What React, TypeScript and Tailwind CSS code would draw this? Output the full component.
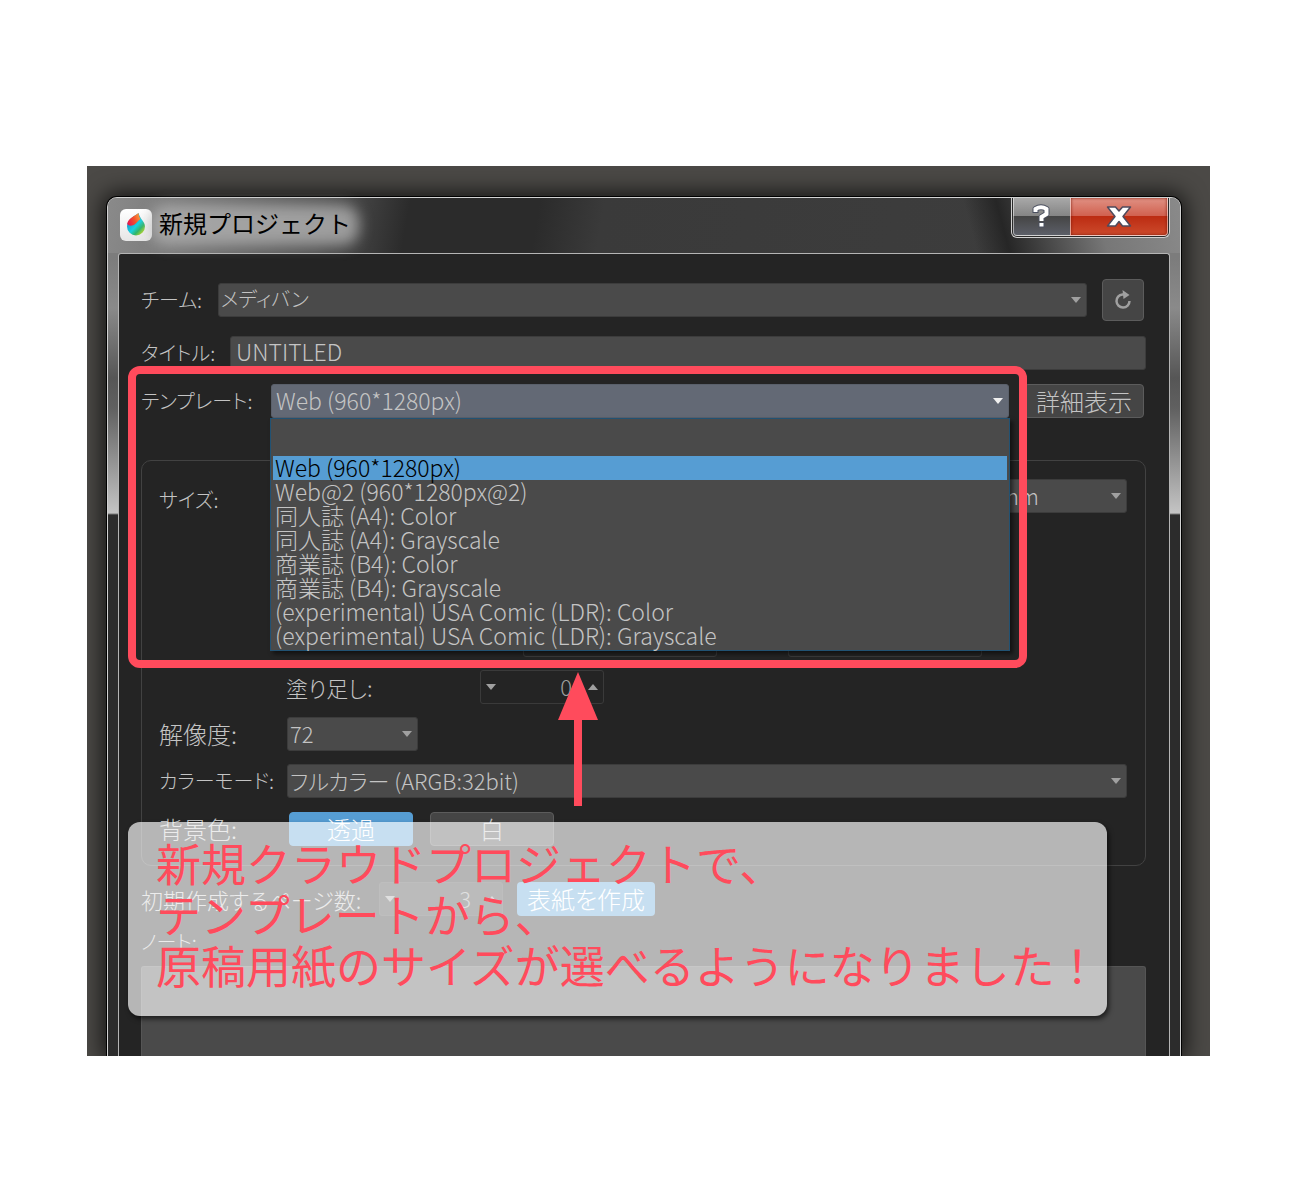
import { ReactNode, useState } from "react";
import clsx from "clsx";

const templates = [
  "Web (960*1280px)",
  "Web@2 (960*1280px@2)",
  "同人誌 (A4): Color",
  "同人誌 (A4): Grayscale",
  "商業誌 (B4): Color",
  "商業誌 (B4): Grayscale",
  "(experimental) USA Comic (LDR): Color",
  "(experimental) USA Comic (LDR): Grayscale",
];

function Triangle({ up, className }: { up?: boolean; className?: string }) {
  return (
    <svg
      viewBox="0 0 10 6"
      className={clsx("h-[6px] w-[10px]", className)}
      aria-hidden="true"
    >
      <path d={up ? "M0 6h10L5 0z" : "M0 0h10L5 6z"} fill="currentColor" />
    </svg>
  );
}

type SelectProps = {
  id: string;
  options: string[];
  value?: string;
  onChange?: (value: string) => void;
  active?: boolean;
  className?: string;
};

function Select({
  id,
  options,
  value,
  onChange,
  active,
  className,
}: SelectProps) {
  return (
    <div className={clsx("relative", className)}>
      <select
        id={id}
        value={value ?? options[0]}
        onChange={(e) => onChange?.(e.target.value)}
        className={clsx(
          "block h-[34px] w-full appearance-none rounded-[3px] border pb-[2px] pr-6 leading-[30px] outline-none",
          active
            ? "border-[#5a606b] bg-[#636975] pl-1"
            : "border-[#3c3c3c] bg-[#4a4a4a] pl-[2px]",
        )}
      >
        {options.map((option) => (
          <option key={option}>{option}</option>
        ))}
      </select>
      <Triangle
        className={clsx(
          "pointer-events-none absolute right-[6px] top-[14px]",
          active ? "text-[#f0f0f0]" : "text-[#a0a0a0]",
        )}
      />
    </div>
  );
}

type SpinnerProps = {
  id: string;
  value?: string;
  label?: string;
  filled?: boolean;
  className?: string;
};

function Spinner({ id, value = "", label, filled, className }: SpinnerProps) {
  return (
    <div
      className={clsx(
        "flex h-[34px] items-center rounded-[3px] border border-[#3a3a3a] px-[5px] text-[#a0a0a0]",
        filled && "bg-[#333333]",
        className,
      )}
    >
      <button type="button" aria-label="減らす">
        <Triangle />
      </button>
      <input
        id={id}
        aria-label={label}
        defaultValue={value}
        className="h-full w-full min-w-0 bg-transparent pb-[2px] pr-4 text-right outline-none"
      />
      <button type="button" aria-label="増やす">
        <Triangle up />
      </button>
    </div>
  );
}

type RowProps = {
  label: string;
  htmlFor?: string;
  labelClass: string;
  children: ReactNode;
};

function Row({ label, htmlFor, labelClass, children }: RowProps) {
  return (
    <div className="flex items-center">
      <label
        htmlFor={htmlFor}
        className={clsx("shrink-0 whitespace-nowrap", labelClass)}
      >
        {label}
      </label>
      {children}
    </div>
  );
}

function AppIcon() {
  return (
    <svg viewBox="0 0 32 32" className="h-8 w-8 shrink-0" aria-hidden="true">
      <defs>
        <linearGradient id="tile" x1="0" y1="0" x2="0" y2="1">
          <stop offset="0" stopColor="#ffffff" />
          <stop offset="1" stopColor="#e6e6e6" />
        </linearGradient>
        <linearGradient id="top" x1="0" y1="0.6" x2="1" y2="0.2">
          <stop offset="0" stopColor="#e8194b" />
          <stop offset="0.5" stopColor="#f4512c" />
          <stop offset="1" stopColor="#fba53c" />
        </linearGradient>
        <linearGradient id="drop" x1="0.2" y1="0.3" x2="0.8" y2="1">
          <stop offset="0" stopColor="#1798d0" />
          <stop offset="0.45" stopColor="#1bd0dc" />
          <stop offset="0.7" stopColor="#2fb56a" />
          <stop offset="1" stopColor="#c8dc1e" />
        </linearGradient>
      </defs>
      <rect width="32" height="32" rx="6" fill="url(#tile)" />
      <path
        d="M18.500 4C15 7 7 10 7 17.500a9 9 0 0 0 18 0C25 13 20 10 18.500 4z"
        fill="url(#drop)"
      />
      <path
        d="M18.500 4C15 7 8 9 7.200 15c2 2.500 5.500 2 8 0 2-1.500 3-3.500 5.300-5C19.500 8.500 18.800 7 18.500 4z"
        fill="url(#top)"
      />
    </svg>
  );
}

function TitleBar() {
  return (
    <div className="flex h-[55px] items-start justify-between rounded-t-lg bg-[linear-gradient(75deg,transparent_80%,#262626_83%,#777777_92%,#8a8a8a_100%),linear-gradient(100deg,#8a8a8a_0%,#777777_8%,#555555_20%,#2b2b2b_28%,#2b2b2b_40%,#3a3a3a_46%,#3e3e3e_100%)] pl-3 pr-[10px]">
      <div className="flex items-start pt-[11px]">
        <AppIcon />
        <h1 className="relative ml-[7px] text-2xl leading-7 text-black">
          <span className="absolute -inset-x-2 -bottom-2 -top-1 rounded-2xl bg-[#b0b0b0]/80 blur-[7px]" />
          <span className="relative">新規プロジェクト</span>
        </h1>
      </div>
      <div className="flex h-10 overflow-hidden rounded-b-md border border-t-0 border-[#d0d0d0] bg-[#2a2a2a] px-px pb-px">
        <button
          type="button"
          aria-label="ヘルプ"
          className="flex w-[57px] justify-center rounded-bl border-b border-l border-white/50 bg-[linear-gradient(#a8a8a8,#858585_48%,#454545_50%,#5c5f68_100%)] pt-[6px]"
        >
          <svg viewBox="0 0 20 24" className="h-6 w-5" fill="none">
            <path
              d="M3.500 9V5Q9 1.500 14.500 5v5l-5 3V17M9.500 18.500v5"
              stroke="#4b5060"
              strokeWidth="6"
              strokeLinejoin="round"
            />
            <path
              d="M3.500 8V5Q9 1.500 14.500 5v5l-5 3V17M9.500 19v3.500"
              stroke="#fff"
              strokeWidth="4"
            />
          </svg>
        </button>
        <button
          type="button"
          aria-label="閉じる"
          className="flex w-[98px] justify-center rounded-br border border-t-0 border-white/50 bg-[linear-gradient(#e09184,#d1614f_48%,#bc2c12_50%,#cc4a2c_100%)] pt-[7px] shadow-[inset_0_0_3px_#7a1808]"
        >
          <svg viewBox="0 0 26 24" className="h-6 w-[26px]">
            <path
              d="M1.500 2h8l3.500 4 3.500-4h8l-7.500 9.500 7.500 9.500h-8l-3.500-4.500-3.500 4.500h-8L9 11.500z"
              fill="#fff"
              stroke="#4f4a5c"
              strokeWidth="1.500"
              strokeLinejoin="round"
            />
          </svg>
        </button>
      </div>
    </div>
  );
}

type TemplatePickerProps = {
  selected: string;
  onSelect: (template: string) => void;
};

function TemplatePicker({ selected, onSelect }: TemplatePickerProps) {
  return (
    <div className="relative flex flex-1 items-center">
      <label
        htmlFor="template"
        className="w-[130px] shrink-0 whitespace-nowrap text-xl leading-6"
      >
        テンプレート:
      </label>
      <div className="relative flex-1 text-[23px]">
        <Select
          id="template"
          options={templates}
          value={selected}
          onChange={onSelect}
          active
        />
        <ul
          role="listbox"
          aria-label="テンプレート"
          className="absolute -inset-x-px top-full z-20 border border-[#215273] bg-[#4a4a4a] px-[2px] pb-[2px] pt-[37px] leading-[22px] shadow-[3px_3px_4px_rgba(0,0,0,0.5)]"
        >
          {templates.map((template) => (
            <li
              key={template}
              role="option"
              aria-selected={template === selected}
              onClick={() => onSelect(template)}
              className={clsx(
                "h-6 whitespace-nowrap pl-[2px]",
                template === selected && "bg-[#569dd3] text-black",
              )}
            >
              {template}
            </li>
          ))}
        </ul>
      </div>

      <div className="pointer-events-none absolute -left-[13px] -right-[18px] -top-[18px] z-30 h-[302px] rounded-xl border-8 border-[#ff4b5c]">
        <svg
          viewBox="0 0 40 134"
          className="absolute left-1/2 top-full mt-3 h-[134px] w-10 -translate-x-1/2"
          aria-hidden="true"
        >
          <path d="M20 0l20 48H24v86h-8V48H0z" fill="#ff4b5c" />
        </svg>
      </div>
    </div>
  );
}

function ProjectForm() {
  const [template, setTemplate] = useState(templates[0]);
  const [background, setBackground] = useState("透過");

  return (
    <form className="mx-[10px] rounded-t-[3px] border border-b-0 border-[#b5b5b5] bg-[#242424] pl-[22px] pr-[23px] pt-[25px] text-[22px] font-light leading-6 text-[#c4c4c4] [font-feature-settings:'palt']">
      <Row label="チーム:" htmlFor="team" labelClass="w-[77px] text-xl">
        <Select id="team" options={["メディバン"]} className="flex-1 text-xl" />
        <button
          type="button"
          aria-label="更新"
          className="ml-[15px] mr-[2px] flex h-[42px] w-[42px] items-center justify-center rounded border border-[#5c5c5c] bg-[#454545]"
        >
          <svg viewBox="0 0 20 20" className="h-5 w-5" fill="none">
            <path
              d="M11 4.500H9.500a6.500 6.500 0 1 0 7 6.500"
              stroke="#a0a0a0"
              strokeWidth="2.500"
            />
            <path d="M9.500 0l7 5-6 4z" fill="#a0a0a0" />
          </svg>
        </button>
      </Row>

      <div className="mt-[15px]">
        <Row label="タイトル:" htmlFor="title" labelClass="w-[89px] text-xl">
          <input
            id="title"
            defaultValue="UNTITLED"
            className="h-[34px] min-w-0 flex-1 rounded-[3px] border border-[#3c3c3c] bg-[#4a4a4a] px-[5px] pb-1 text-[23px] outline-none"
          />
        </Row>
      </div>

      <div className="mt-[14px] flex">
        <TemplatePicker selected={template} onSelect={setTemplate} />
        <button
          type="button"
          className="ml-[15px] mr-[2px] h-[34px] w-[120px] rounded border border-[#5c5c5c] bg-[#454545] text-2xl leading-6 font-light"
        >
          詳細表示
        </button>
      </div>

      <div className="mt-[42px] space-y-[13px] rounded-[10px] border border-[#424242] pb-[19px] pl-[17px] pr-[18px] pt-[18px]">
        <Row
          label="サイズ:"
          htmlFor="unit"
          labelClass="w-[128px] pt-2 text-xl leading-6"
        >
          <Select id="unit" options={["mm"]} className="ml-auto w-[131px]" />
        </Row>
        <div className="flex gap-[71px] pl-[364px] pt-[97px]">
          <Spinner id="width" label="幅" className="w-[194px]" />
          <Spinner id="height" label="高さ" className="w-[194px]" />
        </div>
        <div className="pl-[127px]">
          <Row label="塗り足し:" htmlFor="bleed" labelClass="w-[194px]">
            <Spinner id="bleed" value="0" className="w-[124px]" />
          </Row>
        </div>
        <Row
          label="解像度:"
          htmlFor="dpi"
          labelClass="w-[128px] text-2xl leading-6"
        >
          <Select id="dpi" options={["72"]} className="w-[131px]" />
        </Row>
        <Row
          label="カラーモード:"
          htmlFor="mode"
          labelClass="w-[128px] text-xl"
        >
          <Select
            id="mode"
            options={["フルカラー (ARGB:32bit)"]}
            className="flex-1"
          />
        </Row>
        <div className="pt-px">
          <Row label="背景色:" labelClass="w-[130px] text-2xl leading-6">
            <div className="flex gap-[17px]">
              {["透過", "白"].map((name) => (
                <button
                  key={name}
                  type="button"
                  onClick={() => setBackground(name)}
                  className={clsx(
                    "h-[34px] w-[124px] rounded border text-2xl leading-6 font-light",
                    background === name
                      ? "border-[#569dd3] bg-[#569dd3] text-white"
                      : "border-[#5c5c5c] bg-[#454545]",
                  )}
                >
                  {name}
                </button>
              ))}
            </div>
          </Row>
        </div>
      </div>

      <div className="mt-4">
        <Row
          label="初期作成するページ数:"
          htmlFor="pages"
          labelClass="w-[238px]"
        >
          <Spinner id="pages" value="3" filled className="w-[124px]" />
          <button
            type="button"
            className="ml-[14px] h-[34px] w-[138px] rounded bg-[#569dd3] text-2xl leading-6 font-light text-white"
          >
            表紙を作成
          </button>
        </Row>
      </div>

      <label htmlFor="note" className="mt-[14px] block text-xl leading-6">
        ノート:
      </label>
      <textarea
        id="note"
        className="mt-3 block h-[90px] w-full resize-none rounded-t-[3px] border border-b-0 border-[#555555] bg-[#4a4a4a] outline-none"
      />
    </form>
  );
}

export default function App() {
  return (
    <main className="bg-white pb-36 pl-[87px] pr-[90px] pt-[166px] font-['Noto_Sans_CJK_JP',sans-serif]">
      <div className="relative overflow-hidden bg-[#4b4946] pl-5 pr-[29px] pt-[31px]">
        <div className="rounded-t-[10px] border border-b-0 border-[#d2d2d2] bg-[linear-gradient(#7c7c7c_0px,#7c7c7c_60px,#8a8a8a_110px,#565656_180px,#606060_210px,#c4c4c4_315px,#2c2c2c_317px)] shadow-[0_0_0_1px_#000,0_0_22px_4px_rgba(0,0,0,0.75)]">
          <TitleBar />
          <ProjectForm />
        </div>

        <p className="absolute bottom-10 left-[41px] right-[103px] z-10 whitespace-nowrap rounded-xl bg-white/67 pb-[26px] pl-7 pt-[15px] text-[45px] leading-[51px] text-[#ff4b5c] shadow-[2px_3px_5px_rgba(0,0,0,0.6)]">
          新規クラウドプロジェクトで、
          <br />
          テンプレートから、
          <br />
          原稿用紙のサイズが選べるようになりました！
        </p>
      </div>
    </main>
  );
}
